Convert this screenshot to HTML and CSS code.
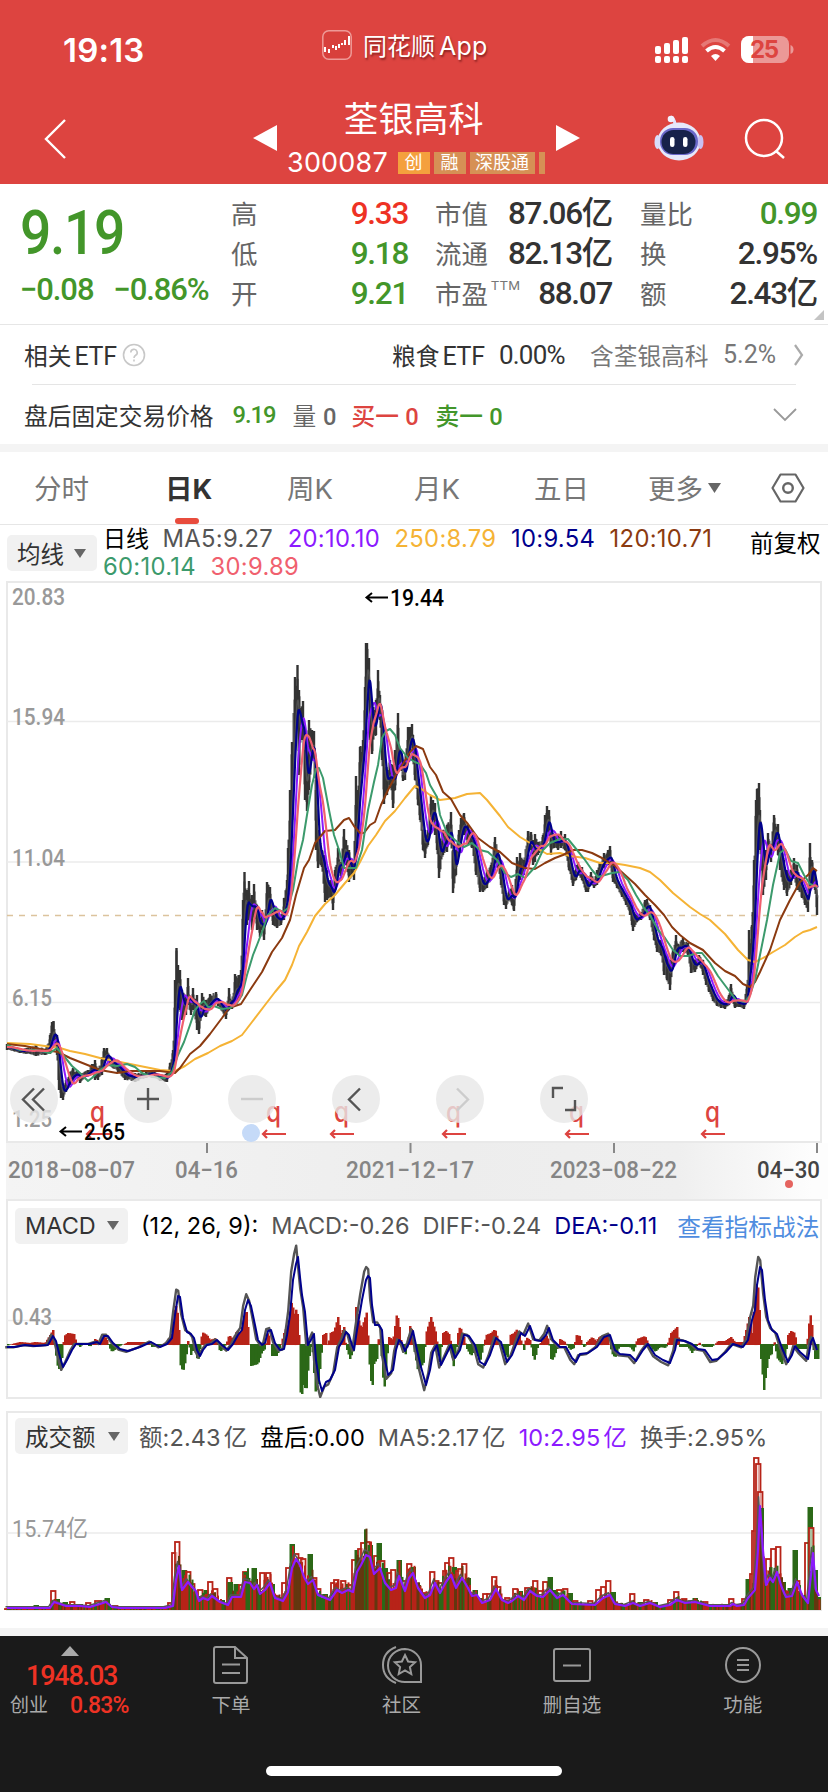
FILE: index.html
```html
<!DOCTYPE html>
<html lang="zh-CN">
<head>
<meta charset="utf-8">
<title>荃银高科 300087</title>
<link rel="stylesheet" href="styles.css">
</head>
<body>
<div class="app">
  <header class="header">
    <div class="status">
      <span class="clock">19:13</span>
      <span class="brand">
        <svg width="30" height="30" viewBox="0 0 30 30"><rect x=".8" y=".8" width="28.4" height="28.4" rx="6" fill="#d8403c" stroke="#ee9a97" stroke-width="1.5"/><path d="M3 17v5M7 19v4M11 15v3M14 16v4M17 14v4M20 13v2M23 10v5M27 6v9" stroke="#fff" stroke-width="2"/></svg>
        <span>同花顺<span class="lat">App</span></span>
      </span>
      <svg class="sys" width="136" height="30" viewBox="654 35 136 30">
        <g fill="#fff"><rect x="655" y="46" width="6" height="8" rx="2"/><rect x="664" y="43" width="6" height="11" rx="2"/><rect x="673" y="40" width="6" height="14" rx="2"/><rect x="682" y="37" width="6" height="17" rx="2"/><rect x="655" y="56" width="6" height="7" rx="2"/><rect x="664" y="56" width="6" height="7" rx="2"/><rect x="673" y="56" width="6" height="7" rx="2"/><rect x="682" y="56" width="6" height="7" rx="2"/></g>
        <g fill="none" stroke="#fff" stroke-width="4"><path d="M702 46Q715.500 34 729 46" opacity=".28"/><path d="M706.500 51Q715.500 43 724.500 51"/></g><path d="M711 56Q715.500 52 720 56L715.500 61Z" fill="#fff"/>
        <rect x="741" y="36" width="48" height="27" rx="8" fill="#eb9997"/><path d="M753 36h-4a8 8 0 0 0-8 8v11a8 8 0 0 0 8 8h4z" fill="#fff"/><path d="M790.500 45v9q3-1 3-4.500t-3-4.500" fill="#eb9997"/>
        <text x="750" y="57.500" class="batt" textLength="29">25</text>
      </svg>
    </div>
    <div class="titlebar">
      <svg class="back" width="24" height="42" viewBox="0 0 24 42"><path d="M22 2 3 21l19 19" fill="none" stroke="#fff" stroke-width="2.400"/></svg>
      <svg class="prev" width="24" height="26" viewBox="0 0 24 26"><path d="M24 0v26L0 13z" fill="#fff"/></svg>
      <div class="name">
        <h1>荃银高科</h1>
        <div class="code"><span class="num">300087</span><i class="tag first">创</i><i class="tag">融</i><i class="tag">深股通</i><i class="tag cut"></i></div>
      </div>
      <svg class="next" width="24" height="26" viewBox="0 0 24 26"><path d="M0 0v26l24-13z" fill="#fff"/></svg>
      <svg class="bot" width="52" height="46" viewBox="0 0 52 46">
        <path d="M22 9Q21 3 18 2" fill="none" stroke="#e1e0fa" stroke-width="3"/><circle cx="18" cy="4" r="3.300" fill="#f2f2ff"/><ellipse cx="26" cy="26.500" rx="21.500" ry="19" fill="#e6e8fb"/><ellipse cx="4.500" cy="27" rx="3" ry="7" fill="#d8ddfa"/><ellipse cx="47.500" cy="27" rx="3" ry="7" fill="#c9c0f2"/><rect x="7" y="13" width="38" height="27" rx="13" fill="#6967c9"/><rect x="8.500" y="15" width="34" height="24" rx="12" fill="#17224a"/><rect x="17" y="22" width="4.500" height="10" rx="2.200" fill="#fff"/><rect x="30" y="22" width="4.500" height="10" rx="2.200" fill="#fff"/>
      </svg>
      <svg class="search" width="42" height="42" viewBox="0 0 42 42"><circle cx="20" cy="20" r="18" fill="none" stroke="#fff" stroke-width="2.500"/><path d="m32 33 8 7" stroke="#fff" stroke-width="2.500"/></svg>
    </div>
  </header>

  <section class="quote">
    <div class="last"><b>9.19</b><div class="chg"><span>−0.08</span><span>−0.86%</span></div></div>
    <dl class="c1"><div><dt>高</dt><dd class="red">9.33</dd></div><div><dt>低</dt><dd class="green">9.18</dd></div><div><dt>开</dt><dd class="green">9.21</dd></div></dl>
    <dl class="c2"><div><dt>市值</dt><dd>87.06亿</dd></div><div><dt>流通</dt><dd>82.13亿</dd></div><div><dt>市盈<sup>TTM</sup></dt><dd>88.07</dd></div></dl>
    <dl class="c3"><div><dt>量比</dt><dd class="green">0.99</dd></div><div><dt>换</dt><dd>2.95%</dd></div><div><dt>额</dt><dd>2.43亿</dd></div></dl>
    <svg class="corner" width="10" height="10" viewBox="0 0 10 10"><path d="M10 0v10H0z" fill="#c4c4c4"/></svg>
  </section>

  <section class="row etf">
    <span class="lead">相关<span class="din">ETF</span></span>
    <svg width="24" height="24" viewBox="0 0 24 24"><circle cx="12" cy="12" r="10.500" fill="none" stroke="#c8c8c8" stroke-width="1.600"/><path d="M8.800 9.600a3.200 3.200 0 1 1 4.800 2.700q-1.600 1-1.600 2.700M12 16.500v2" fill="none" stroke="#c8c8c8" stroke-width="1.600"/></svg>
    <span class="e1">粮食<span class="din">ETF</span></span><span class="e2 din">0.00%</span><span class="e3">含荃银高科</span><span class="e4 din">5.2%</span>
    <svg class="e5" width="12" height="24" viewBox="0 0 12 24"><path d="m2 2 7 10-7 10" fill="none" stroke="#aaa" stroke-width="2.200"/></svg>
  </section>
  <div class="line"></div>
  <section class="row after">
    <span>盘后固定交易价格</span><b class="a1 green">9.19</b><span class="a2">量 <b>0</b></span><span class="a3">买一 <b>0</b></span><span class="a4">卖一 <b>0</b></span>
    <svg class="a5" width="24" height="16" viewBox="0 0 24 16"><path d="m1 2 11 11L23 2" fill="none" stroke="#999" stroke-width="1.800"/></svg>
  </section>
  <div class="band"></div>

  <nav class="tabs">
    <a class="t1">分时</a><a class="t2 on">日K</a><a class="t3">周K</a><a class="t4">月K</a><a class="t5">五日</a><a class="t6">更多</a>
    <svg class="t7" width="13" height="10" viewBox="0 0 13 10"><path d="M0 0h13L6.500 10z" fill="#666"/></svg>
    <svg class="t8" width="34" height="30" viewBox="0 0 34 30"><path d="M9.500 1.500h15L32.500 15l-8 13.500h-15L1.500 15z" fill="none" stroke="#666" stroke-width="2.200" stroke-linejoin="round"/><circle cx="17" cy="15" r="4.800" fill="none" stroke="#666" stroke-width="2.400"/></svg>
  </nav>

  <section class="ma">
    <span class="pill">均线<i></i></span>
    <div class="malist"><span class="k">日线</span><span>MA5:9.27</span><span class="purple">20:10.10</span><span class="gold">250:8.79</span><span class="navy">10:9.54</span><span class="brown">120:10.71</span><span class="sea">60:10.14</span><span class="pink">30:9.89</span></div>
    <span class="adj">前复权</span>
  </section>

  <section class="kchart">
    <svg id="price" width="828" height="562" viewBox="0 581 828 562"></svg>
    <div class="tools">
      <button><svg viewBox="0 0 48 48"><path d="M34 13.500 23 24.500l11 11M24 13.500 13 24.500l11 11"/></svg></button>
      <button class="wide"><svg viewBox="0 0 48 48"><path d="M24 13v22M13 24h22"/></svg></button>
      <button class="off"><svg viewBox="0 0 48 48"><path d="M13 24h22"/></svg></button>
      <button><svg viewBox="0 0 48 48"><path d="M28 13.500 17 24.500l11 11"/></svg></button>
      <button class="off"><svg viewBox="0 0 48 48"><path d="m21 13.500 11 11-11 11"/></svg></button>
      <button><svg viewBox="0 0 48 48"><path d="M23 13H13v10M25 35h10V25"/></svg></button>
    </div>
  </section>
  <svg class="axis" id="axis" width="828" height="56" viewBox="0 1143 828 56"></svg>

  <section class="panel macd">
    <div class="legend"><span class="pill">MACD<i></i></span><span class="k">(12, 26, 9):</span><span>MACD:-0.26</span><span>DIFF:-0.24</span><span class="navy">DEA:-0.11</span><a class="link">查看指标战法</a></div>
    <svg id="macd" width="828" height="154" viewBox="0 1244 828 154"></svg>
  </section>
  <section class="panel vol">
    <div class="legend"><span class="pill">成交额<i></i></span><span>额:2.43<em>亿</em></span><span class="k">盘后:0.00</span><span>MA5:2.17<em>亿</em></span><span class="purple">10:2.95<em>亿</em></span><span>换手:2.95%</span></div>
    <svg id="vol" width="828" height="154" viewBox="0 1456 828 154"></svg>
  </section>
  <div class="band foot"></div>

  <footer class="nav">
    <div class="index"><svg width="18" height="10" viewBox="0 0 18 10"><path d="m9 0 9 10H0z" fill="#aaa"/></svg><b>1948.03</b><div><span>创业</span><b>0.83%</b></div></div>
    <a><svg viewBox="0 0 44 40"><path d="M26 2H7a2 2 0 0 0-2 2v32a2 2 0 0 0 2 2h29a2 2 0 0 0 2-2V13zM26 2v11h12M13 19.500h18M13 28h18"/></svg>下单</a>
    <a><svg viewBox="0 0 44 40"><path d="M16 2Q3 7 3 20t13 18M25 4a16.500 16 0 0 0 0 33h16V20A16.500 16 0 0 0 25 4ZM25 10l3.100 6.500 7 .8-5.200 4.700 1.400 7-6.300-3.500-6.300 3.500 1.400-7-5.200-4.700 7-.8z"/></svg>社区</a>
    <a><svg viewBox="0 0 44 40"><rect x="4" y="4" width="36" height="32" rx="2"/><path d="M13 20.500h18"/></svg>删自选</a>
    <a><svg viewBox="0 0 44 40"><circle cx="22" cy="20" r="17"/><path d="M16 15h12M16 20h12M16 25h12"/></svg>功能</a>
    <div class="home"></div>
  </footer>
</div>
<script src="chart.js"></script>
</body>
</html>
```
FILE: styles.css
```css
* { box-sizing: border-box; }
body { margin: 0; background: #fff; font-family: "Inter", "Noto Sans CJK SC", sans-serif; color: #333; }
h1, dl, dd, dt { margin: 0; font-weight: 400; }
i, em { font-style: normal; }
svg { display: block; flex: none; }
.app { width: 828px; height: 1792px; overflow: hidden; display: flex; flex-direction: column; }
.app > * { flex: none; }
.red { color: #ee3224 !important; }
.green { color: #43962a !important; }
.k { color: #000; }
.purple { color: #8c1aff; }
.gold { color: #f5b335; }
.navy { color: #00008c; }
.brown { color: #8b3a10; }
.sea { color: #3c9a6c; }
.pink { color: #f0606e; }
.din { font-family: "Roboto", sans-serif; }

.header { height: 184px; background: #dd4440; color: #fff; }
.status { height: 100px; display: flex; align-items: flex-start; }
.clock { width: 259px; margin-left: 63px; padding-top: 31px; font: 600 33px/38px Inter; letter-spacing: .2px; }
.brand { width: 332px; display: flex; gap: 11px; padding-top: 31px; font-size: 24px; line-height: 30px; text-shadow: 1px 2px 2px rgba(60,0,0,.5); }
.brand > svg { margin-top: -1px; }
.lat { margin-left: 4px; font-size: 25px; letter-spacing: .2px; }
.sys { margin-top: 35px; overflow: visible; }
.batt { font: 700 24px Inter; fill: #dd4440; }
.titlebar { height: 84px; display: flex; align-items: flex-start; }
.back { margin: 18px 0 0 43px; }
.prev { margin: 25px 0 0 186px; }
.name { width: 280px; height: 84px; }
h1 { text-align: center; font-size: 35px; line-height: 42px; margin-top: -2px; padding-right: 7px; }
.code { display: flex; gap: 4px; padding-left: 10px; margin-top: 8px; height: 30px; align-items: center; }
.num { width: 107px; font-size: 27px; line-height: 28px; letter-spacing: .2px; }
.tag { height: 22px; padding: 0 6px 0 5px; background: #d69055; font-size: 18px; line-height: 21px; min-width: 32px; text-align: center; }
.tag.first { background: #f4a03d; }
.tag.cut { min-width: 0; width: 6px; padding: 0; }
.next { margin: 25px 0 0 -1px; }
.bot { margin: 15px 0 0 73px; }
.search { margin: 18px 0 0 39px; }

.quote { height: 141px; display: flex; position: relative; border-bottom: 1px solid #e6e6e6; font-family: Roboto, "Noto Sans CJK SC", sans-serif; padding-top: 10px; }
.last { width: 231px; padding-left: 20px; color: #43962a; }
.last > b { display: block; width: 140px; font-weight: 500; font-size: 62px; line-height: 70px; letter-spacing: -1.500px; margin-top: 4px; transform: scaleX(.89); transform-origin: left; }
.chg { display: flex; gap: 20px; margin-top: 2px; font-weight: 500; font-size: 31px; line-height: 40px; letter-spacing: -1.100px; }
.quote dl > div { display: flex; justify-content: space-between; height: 40px; line-height: 40px; }
.quote dt { font-size: 26.500px; color: #666; white-space: nowrap; padding-top: 1px; }
.quote dd { font-size: 31.500px; font-weight: 500; letter-spacing: -1.300px; }
.quote sup { font-size: 13.500px; vertical-align: 14px; line-height: 0; margin-left: 3px; color: #777; letter-spacing: .5px; }
.c1 { width: 177px; }
.c2 { width: 177px; margin-left: 27px; }
.c3 { width: 177px; margin-left: 28px; }
.corner { position: absolute; right: 4px; bottom: 4px; }

.row { display: flex; align-items: center; font-size: 23.700px; }
.etf { height: 59px; padding-left: 24px; }
.lead { width: 98px; }
.lead .din, .e1 .din { margin-left: 3px; font-size: 25px; letter-spacing: -.3px; }
.e1 { margin-left: 246px; width: 107px; }
.e2 { width: 91px; font-size: 26px; letter-spacing: -.8px; }
.e3 { width: 133px; color: #777; }
.e4 { width: 70px; color: #777; font-size: 25px; }
.line { height: 1px; background: #e5e5e5; margin: 0 32px; }
.after { height: 59px; padding: 1px 0 0 24px; }
.after b { font-family: Roboto; font-weight: 500; letter-spacing: -1px; }
.a1 { margin-left: 19px; width: 60px; }
.a2 { width: 59px; color: #666; }
.a3 { width: 84px; color: #dd4440; font-weight: 500; }
.a4 { width: 337px; color: #43962a; font-weight: 500; }
.band { height: 8px; background: #f4f4f4; }

.tabs { height: 73px; display: flex; align-items: center; border-bottom: 1px solid #e6e6e6; font-size: 27.500px; color: #777; }
.tabs a { height: 72px; line-height: 74px; }
.t1 { margin-left: 34px; width: 131px; }
.t2 { width: 122px; }
.tabs .on { color: #333; font-weight: 700; position: relative; }
.on::after { content: ""; position: absolute; left: 10px; bottom: 0; width: 24px; height: 6px; border-radius: 3px; background: #e84c3d; }
.t3 { width: 127px; }
.t4 { width: 120px; }
.t5 { width: 114px; }
.t6 { width: 60px; }
.t8 { margin-left: 50px; }

.pill { display: flex; flex: none; align-items: center; height: 36px; border-radius: 5px; background: #f1f1f1; color: #333; white-space: nowrap; letter-spacing: 0; }
.pill i { border: 6px solid transparent; border-top: 9px solid #666; border-bottom: 0; }
.ma { height: 56px; display: flex; position: relative; font-size: 23.500px; }
.ma .pill { width: 90px; margin: 10px 0 0 7px; padding-left: 10px; gap: 10px; }
.malist { width: 640px; margin-left: 6px; display: flex; flex-wrap: wrap; column-gap: 14.500px; align-content: flex-start; line-height: 28px; color: #555; font-size: 23.800px; letter-spacing: .3px; }
.malist .k { font-size: 23px; letter-spacing: 0; margin-right: -1px; }
.adj { color: #000; line-height: 38px; margin-left: 7px; font-size: 23.500px; }

.kchart { height: 562px; position: relative; }
.kchart > svg { overflow: visible; }
.tools { position: absolute; left: 10px; top: 494px; display: flex; gap: 56px; }
.tools button { width: 48px; height: 48px; padding: 0; border: 0; border-radius: 50%; background: rgba(231,231,231,.8); }
.tools .wide { margin-left: 10px; }
.tools svg { fill: none; stroke: #555; stroke-width: 2.400; }
.tools .off svg { stroke: #ccc; }
.axis { background: linear-gradient(165deg, rgba(255,255,255,0) 50%, rgba(244,244,244,0)), linear-gradient(90deg, #fff 0 6px, #f4f4f4 6px, #ededed 55%, #efefef 82%, #fdfdfd 98%); }
.ax { font: 500 24px Roboto; fill: #858585; }
.ax.now { fill: #444; }
.lab { font: 500 24px Roboto, "Noto Sans CJK SC"; fill: #999; }
.lab.cn { font-weight: 400; }
.mark { font: 500 24px Roboto; fill: #000; }
.q { font: 500 28px Inter; fill: #dd4440; }

.panel { height: 200px; border: 2px solid #e9e9e9; margin: 0 6px; }
.panel > svg { margin-left: -8px; }
.legend { display: flex; height: 43px; padding: 6px 0 0 7px; align-items: center; font-size: 24px; white-space: nowrap; color: #555; }
.macd .pill { width: 113px; padding-left: 10px; gap: 11px; }
.macd .legend { gap: 13px; font-size: 23.500px; }
.link { color: #4f8ddf; font-size: 23.700px; margin-left: 7px; }
.vol { margin-top: 12px; }
.vol .legend { gap: 13px; font-size: 23.500px; letter-spacing: .1px; padding-top: 3px; }
.vol em { margin-left: 3px; }
.vol .pill { width: 113px; padding-left: 10px; gap: 12px; margin-right: -2px; }
.foot { margin-top: 17px; }

.nav { height: 156px; background: #1a1a1a; position: relative; display: flex; color: #aaa; }
.nav > a { width: 171px; height: 100px; display: flex; flex-direction: column; align-items: center; font-size: 19.500px; line-height: 28px; }
.nav > a svg { width: 44px; height: 40px; margin: 9px 0 6px; fill: none; stroke: #999; stroke-width: 2; }
.index { width: 146px; font-size: 19px; }
.index svg { margin: 10px 0 0 61px; }
.index b { display: block; font: 500 27px/34px Roboto; color: #ee3224; margin: 3px 0 0 26px; letter-spacing: -1.200px; }
.index div { display: flex; padding-left: 10px; line-height: 32px; margin-top: -3px; }
.index div b { font-size: 23px; line-height: 30px; margin: 1px 0 0 22px; letter-spacing: -.8px; }
.home { position: absolute; left: 266px; bottom: 16px; width: 296px; height: 10px; border-radius: 5px; background: #fff; }
```
FILE: chart.js
```js
const nums = s => s.trim().split(';').map(p => p.split(',').map(v => isNaN(v) ? v : +v));
const line = (pts, color, w = 2) =>
  `<polyline fill="none" stroke="${color}" stroke-width="${w}" stroke-linejoin="round" points="${pts.map(p => p[0].toFixed(1) + ',' + p[1].toFixed(1)).join(' ')}"/>`;
const at = (pts, x, k = 1) => {
  if (x <= pts[0][0]) return pts[0][k];
  for (let i = 1; i < pts.length; i++) {
    const a = pts[i - 1], b = pts[i];
    if (x <= b[0]) return a[k] + (b[k] - a[k]) * (x - a[0]) / (b[0] - a[0]);
  }
  return pts[pts.length - 1][k];
};
let seed = 7;
const rnd = () => (seed = (seed * 16807) % 2147483647) / 2147483647;
const text = (x, y, w, cls, t) => `<text x="${x}" y="${y}" textLength="${w}" lengthAdjust="spacingAndGlyphs" class="${cls}">${t}</text>`;
const rule = (y, x2 = 821) => `<path d="M7 ${y}H${x2}" stroke="#ebebeb" stroke-width="1.5"/>`;

/* x, high, low of the price range */
const candles = nums('7,1044,1050;20,1049,1053;36,1045,1056;45,1049,1055;50,1035,1054;52,1022,1045;53.5,1021,1040;57,1035,1055;59,1060,1090;61,1080,1098;63,1088,1100;66,1080,1092;70,1072,1085;73,1068,1082;77,1070,1078;80,1073,1083;88,1070,1076;92,1064,1074;95,1060,1080;98,1068,1080;102,1057,1075;104,1048,1065;107,1048,1060;110,1056,1066;118,1062,1072;125,1070,1080;135,1073,1082;146,1072,1078;152,1070,1076;160,1075,1081;167,1073,1082;170,1063,1075;173,1050,1065;175,980,1050;176.5,948,1020;178,965,1000;180,970,1010;182,990,1020;186,995,1015;188,978,1005;191,1000,1015;193,988,1010;197,995,1030;199,1015,1034;202,993,1015;206,1000,1017;210,994,1010;216,992,1003;218,998,1006;226,1007,1019;229,988,1010;232,1000,1009;235,974,1004;239,975,1000;241,970,980;243,900,960;244.5,872,920;247,890,925;249,881,920;252,895,930;254,884,915;257,905,930;260,920,937;262,910,930;264,925,940;267,882,915;270,887,910;273,905,925;277,910,928;281,915,925;284,898,920;287,880,910;288,848,900;290,790,870;292,742,820;295,677,750;297.5,665,720;299,690,775;301,708,740;303,701,740;305,750,800;307,760,811;309,720,790;312,730,760;314,731,760;316,790,850;318,830,868;322,850,867;325,855,902;327,870,900;331,880,897;333,890,910;335,870,890;338,848,870;341,862,880;344,829,865;346,840,865;349,850,882;352,862,876;354,862,880;356,776,860;358,790,830;360,747,790;363,740,770;365,687,740;366,643,700;367,643,690;369,658,700;370,690,740;372,710,754;376,700,735;378,670,715;380,695,720;382,710,760;384,745,804;387,770,795;390,760,785;393,765,808;395,750,790;398,713,765;400,750,765;403,775,781;405,760,780;408,727,760;410,727,750;412,724,745;413,735,760;415,750,780;418,780,805;420,790,820;423,830,850;425,830,858;428,830,845;431,796,825;433,800,820;435,803,835;437,820,850;439,840,878;443,830,855;447,825,852;451,812,840;453,850,893;456,850,875;459,830,850;461,818,840;464,813,835;468,825,845;472,830,848;476,840,875;480,870,892;483,880,892;487,870,888;491,865,880;495,837,860;498,850,868;501,865,885;504,890,905;506,895,909;509,890,900;512,885,905;514,895,911;517,857,885;520,853,880;524,860,875;528,831,850;531,832,850;533,840,865;535,834,862;538,842,855;543,835,850;545,815,840;547,806,830;549,810,835;551,830,855;554,836,848;558,835,850;561,831,848;565,834,850;569,852,870;573,875,886;576,865,880;578,862,875;582,867,880;586,885,892;588,880,892;591,872,885;594,880,888;597,870,885;600,862,872;604,853,868;608,850,865;610,846,865;613,865,882;617,880,888;622,888,897;626,895,905;630,900,915;632,905,925;633,910,931;637,915,922;641,912,920;645,900,915;647,899,908;650,905,920;654,925,940;657,935,952;661,940,955;664,950,975;667,955,980;670,960,990;673,950,965;676,935,955;678,944,955;683,938,952;688,943,955;691,952,973;695,960,972;699,955,965;703,960,975;706,972,985;709,980,992;713,990,1001;717,998,1006;721,1000,1008;725,1000,1009;729,995,1005;731,984,1000;735,997,1008;740,1000,1007;744,1000,1009;747,985,1003;749,930,995;752,925,965;754,860,920;756,800,870;757,789,850;759,783,840;760,810,850;763,840,895;766,850,880;768,833,855;771,845,862;774,815,840;778,824,855;780,840,870;784,860,890;787,870,896;791,870,885;794,858,878;797,865,890;802,880,898;805,890,905;808,895,912;810,843,880;812,860,885;815,870,890;817,895,915');
const ma60 = nums('7,1045;20,1050;36,1050;50,1053;57,1048;63,1055;72,1066;80,1073;88,1081;92,1078;100,1070;108,1065;117,1066;127,1064;135,1067;142,1073;152,1077;165,1078;172,1072;178,1055;184,1042;190,1025;195,1010;200,1004;204,1001;208,1007;214,1006;222,1009;230,1008;237,1003;242,995;247,975;253,955;257,945;262,932;268,915;275,908;283,912;288,908;293,890;298,860;303,840;307,815;312,785;316,769;319,768;323,778;329,810;334,835;339,850;344,868;352,868;356,868;362,850;368,810;374,782;378,765;382,738;386,731;390,729;395,735;400,748;408,758;415,762;420,764;426,773;430,785;437,797;440,815;447,833;455,840;464,847;472,843;480,850;488,852;497,860;505,873;511,877;518,874;525,878;535,867;543,850;550,843;560,839;568,839;577,850;585,860;592,870;598,877;605,875;612,873;620,872;628,880;636,895;644,908;650,915;658,930;665,938;673,950;680,956;688,956;697,953;702,953;710,963;718,976;727,988;736,1000;745,1002;750,995;755,980;760,955;767,920;773,885;780,853;785,849;791,861;798,863;804,875;810,884;817,887');
const ma120 = nums('7,1044;25,1046;45,1050;58,1052;70,1058;85,1064;100,1070;117,1073;130,1071;160,1071;175,1073;180,1068;190,1054;200,1046;210,1034;222,1018;229,1008;241,1004;250,990;262,972;272,952;282,938;290,920;296,895;304,868;309,860;315,843;325,831;335,830;344,820;349,818;354,826;360,833;364,833;370,825;375,822;381,805;388,790;396,775;404,762;410,752;416,746;423,749;430,767;436,775;443,792;451,799;460,815;468,824;478,838;490,847;500,852;512,863;525,868;535,869;545,863;555,858;563,855;573,850;582,850;592,853;602,858;615,866;625,875;635,884;645,895;655,905;664,915;672,927;680,935;690,943;703,950;715,963;725,971;735,976;743,984;750,987;755,982;760,972;770,950;780,920;790,900;800,882;808,875;813,868;817,871');
const ma250 = nums('7,1043;30,1044;60,1048;70,1051;85,1054;100,1058;120,1062;140,1066;160,1070;175,1071;185,1066;195,1059;208,1053;220,1046;232,1041;242,1035;252,1022;265,1005;275,992;285,980;292,965;299,946;307,932;315,916;325,904;335,895;345,883;354,873;360,862;368,846;376,835;385,821;395,811;405,798;415,786;420,788;430,795;440,800;455,798;467,794;480,793;487,800;500,816;508,827;520,837;530,843;540,850;547,854;560,853;570,856;585,858;600,863;612,863;625,865;640,868;650,872;660,880;673,893;690,907;700,914;710,920;725,934;738,950;748,960;755,962;765,957;773,952;785,945;795,937;803,932;810,930;817,927');

const mean = days => {
  const out = [];
  for (let x = 7; x <= 817.5; x += .5) {
    let s = 0;
    for (let i = 0; i < days; i++) {
      const u = x - i * .5;
      s += (at(candles, u, 1) + at(candles, u, 2)) / 2;
    }
    out.push([x, s / days]);
  }
  return out;
};
let bars = '';
for (let x = 7.5; x <= 817; x += 1) {
  const h = at(candles, x, 1), l = at(candles, x, 2), r = l - h;
  bars += `<path d="M${x} ${(h + r * .3 * rnd()).toFixed(1)}V${(l - r * .2 * rnd()).toFixed(1)}" stroke="${rnd() > .4 ? '#3a3a3a' : '#5a5a5a'}" stroke-width="2"/>`;
}
for (const c of candles) bars += `<path d="M${c[0]} ${c[1]}V${c[2]}" stroke="#333" stroke-width="2.4"/>`;
let marks = '';
for (const x of [86, 262, 330, 442, 565, 701]) {
  marks += `<text x="${x + 4}" y="1121.500" class="q" textLength="15" lengthAdjust="spacingAndGlyphs">q</text><path d="M${x + 24} 1134H${x + 1}M${x + 5} 1130l-4 4 4 4" fill="none" stroke="#dd4440" stroke-width="2.2"/>`;
}
document.getElementById('price').innerHTML =
  `<rect x="7" y="582" width="814" height="560" fill="none" stroke="#e9e9e9" stroke-width="2"/>` + rule(721.5) + rule(862) + rule(1002.5) +
  text(12, 605, 53, 'lab', '20.83') + text(12, 725, 53, 'lab', '15.94') + text(12, 866, 53, 'lab', '11.04') + text(12, 1006, 40, 'lab', '6.15') + text(12, 1127, 40, 'lab', '1.25') +
  `<path d="M7 915.500H821" stroke="#dcc39d" stroke-width="1.500" stroke-dasharray="6 6"/>` +
  bars + line(mean(5), '#505050', 1.5) + line(mean(20), '#8c1aff') + line(ma250, '#f5b335') + line(mean(10), '#00008c', 2.2) + line(ma120, '#8b3a10') + line(ma60, '#3c9a6c') + line(mean(30), '#f0606e', 2.2) +
  `<circle cx="251" cy="1133" r="9" fill="#c5daf8"/>` + marks +
  `<path d="M388 597.500H366M372 593l-5.500 4.500 5.500 4.500M82 1131.500H60M66 1127l-5.500 4.500 5.500 4.500" fill="none" stroke="#000" stroke-width="2"/>` +
  text(390, 606, 54, 'mark', '19.44') + text(84, 1139.5, 41, 'mark', '2.65');

document.getElementById('axis').innerHTML =
  `<path d="M207 1143v10M410.500 1143v10M614 1143v10M817 1143v10" stroke="#888" stroke-width="2"/>` +
  text(8, 1178, 127, 'ax', '2018−08−07') + text(175, 1178, 63, 'ax', '04−16') + text(346, 1178, 128, 'ax', '2021−12−17') + text(550, 1178, 127, 'ax', '2023−08−22') + text(757, 1178, 63, 'ax now', '04−30') +
  `<circle cx="789" cy="1184" r="4" fill="#e5645f"/>`;

const dea = nums('7,1347;15,1347;25,1345;35,1346;48,1345;53,1336;56,1341;60,1357;63,1367;67,1360;72,1350;76,1344;90,1344;97,1342;100,1344;104,1336;108,1336;113,1343;120,1349;128,1351;140,1347;151,1342;160,1347;167,1344;172,1338;175,1315;178,1296;180,1297;183,1318;187,1332;191,1334;194,1338;197,1350;200,1356;203,1350;207,1345;212,1344;217,1340;222,1345;228,1350;233,1344;238,1335;242,1330;245,1310;248,1300;251,1306;255,1325;258,1340;262,1345;265,1343;268,1331;271,1330;275,1343;280,1350;284,1349;287,1335;290,1315;293,1280;296,1264;298,1257;300,1277;302,1295;305,1312;308,1345;312,1338;314,1334;316,1360;319,1380;322,1391;326,1382;330,1380;335,1370;339,1347;343,1340;346,1332;349,1335;352,1345;354,1350;357,1330;362,1300;366,1280;368,1276;370,1278;372,1305;375,1325;379,1325;382,1330;384,1355;388,1375;393,1370;396,1350;399,1340;402,1343;405,1351;409,1343;413,1331;417,1350;421,1367;426,1385;430,1370;433,1352;437,1345;441,1365;446,1355;451,1345;455,1358;460,1350;464,1335;469,1336;475,1345;480,1362;485,1365;490,1355;496,1338;501,1342;507,1362;512,1355;518,1340;521,1333;525,1336;530,1326;535,1340;541,1341;546,1335;549,1328;553,1340;560,1347;566,1347;572,1358;576,1362;580,1354;588,1353;597,1347;604,1337;610,1335;615,1350;620,1354;630,1355;636,1361;643,1350;648,1344;655,1355;663,1360;670,1363;675,1350;677,1340;685,1341;692,1344;698,1349;705,1350;712,1360;718,1359;726,1352;733,1344;743,1347;748,1340;752,1320;755,1310;757,1285;760,1267;762,1270;765,1300;768,1320;772,1330;777,1334;782,1348;788,1362;792,1355;795,1346;800,1352;808,1359;811,1342;813,1338;817,1350');
const hist = nums('7,2;12,-1;20,-3;30,-2;35,-3;45,-2;50,-10;53,-15;55,5;58,25;61,25;63,3;64,-9;68,-12;74,-11;77,0;80,3;85,-2;90,3;95,-6;100,-3;104,-10;107,-5;109,3;112,8;118,3;128,-3;140,-3;148,-3;152,3;160,2;167,-4;172,-12;175,-40;177,-38;179,-15;180,20;183,28;186,15;188,-4;191,11;194,3;198,18;200,5;202,-13;207,-10;210,-5;216,-7;220,8;225,3;229,-10;233,-6;237,-15;240,-10;243,-22;246,-38;249,-8;251,22;258,20;262,8;265,5;268,-15;270,-4;272,12;277,12;280,3;284,-12;288,-22;292,-45;294,-30;297,-38;299,-10;300,48;302,50;304,38;306,50;309,15;311,3;313,10;315,48;318,45;321,15;323,-10;326,-12;328,3;330,-12;334,-14;338,-28;341,-12;344,-18;346,3;350,15;354,5;356,-38;360,-20;362,-18;367,-34;369,15;372,48;374,20;377,15;378,-8;381,5;384,48;387,15;389,-8;393,-5;397,-33;400,-15;402,5;406,11;410,-19;412,-15;414,5;418,28;424,18;426,-12;431,-28;436,-12;438,5;440,18;443,-12;446,-14;450,-10;453,25;456,8;458,-12;460,-19;464,-8;467,5;471,12;475,6;480,18;483,4;486,-10;491,-12;495,-16;498,-6;502,3;505,10;508,14;510,-10;514,-12;517,-16;520,-8;524,6;526,-8;530,-5;533,12;535,17;537,5;541,-3;547,-10;549,-3;551,15;553,16;557,5;560,-6;565,-3;570,6;574,4;576,-10;580,-9;583,3;585,3;587,-3;592,-8;596,-4;600,-9;608,-8;610,2;613,12;616,13;619,3;630,3;634,8;637,-6;645,-9;650,2;655,8;660,3;666,4;671,-12;677,-18;680,3;688,3;692,9;696,3;699,-3;703,3;712,3;718,-4;725,-4;731,-8;735,-3;743,-3;746,-15;749,-28;752,-12;754,-40;757,-65;759,-50;760,-20;761,15;764,46;766,30;769,12;772,10;774,-6;777,14;782,20;786,10;788,-10;791,-14;795,-12;797,5;806,5;808,-10;810,-33;812,-20;813,3;815,15;818,15');
let hb = '';
for (let x = 8; x <= 818; x += 1.5) {
  const v = at(hist, x);
  hb += v < 0 ? `<rect x="${x - 1}" y="${(1345 + v).toFixed(1)}" width="2.500" height="${-v}" fill="#b72318"/>` : `<rect x="${x - 1}" y="1344" width="2.500" height="${v}" fill="#2b6817"/>`;
}
const diff = dea.map(p => [p[0] - 1.8, 1345 + (p[1] - 1345) * 1.13]);
document.getElementById('macd').innerHTML = rule(1320.5) + hb + line(diff, '#555', 2.4) + line(dea, '#00008c', 2) + text(12, 1325, 40, 'lab', '0.43');

const peaks = nums('7,2,r;36,5,g;45,2,r;53,20,r;57,11,g;65,8,g;72,9,r;80,6,g;88,8,r;97,10,r;107,12,g;115,5,r;145,2,g;166,3,r;170,8,r;174,58,r;177,69,r;184,40,g;188,39,r;192,27,r;200,21,r;206,20,g;210,29,r;215,22,r;222,10,g;229,33,r;230,28,g;236,26,g;241,26,r;245,39,r;246,38,g;254,42,g;262,38,r;268,38,r;272,26,g;280,13,r;284,28,r;288,43,r;292,66,g;296,57,r;300,53,r;303,52,r;310,56,g;314,33,r;318,22,r;325,16,g;333,28,r;336,31,r;343,30,r;349,26,r;354,51,r;357,60,g;360,62,r;363,68,r;367,69,r;370,65,g;376,55,r;379,67,g;382,50,r;385,42,g;389,38,r;393,41,r;399,50,g;404,30,r;409,47,r;413,43,g;418,25,g;425,18,r;432,39,r;436,30,r;440,28,r;445,40,r;447,48,r;451,53,r;454,43,g;458,40,r;460,42,r;464,47,r;468,32,g;475,20,g;480,12,g;485,17,r;489,17,r;494,34,r;498,24,r;507,13,r;515,22,r;520,19,g;527,23,r;531,22,g;535,30,r;540,20,r;545,29,r;550,33,g;555,20,g;559,21,r;565,22,r;570,17,g;575,10,r;590,10,r;598,21,r;603,24,r;608,30,r;613,18,g;620,7,g;632,17,r;640,8,g;646,11,r;655,8,g;662,5,r;670,11,r;676,19,r;684,12,r;695,12,g;705,9,r;715,6,g;731,12,r;740,6,r;744,12,r;748,31,g;752,37,r;754,80,r;756,153,r;758,147,r;760,119,r;761,102,g;765,40,r;768,52,r;773,62,r;778,64,r;783,28,g;790,22,g;795,60,g;797,30,r;803,14,g;807,68,r;810,103,g;811,83,r;815,40,g;818,13,g');
const ma10 = nums('7,2;50,2;54,8;60,6;66,4;80,4;90,3;100,6;106,8;112,3;120,2;165,2;173,4;176,30;179,44;182,20;188,28;192,23;196,19;199,9;203,12;208,10;212,14;220,8;228,5;232,13;241,13;245,28;250,27;254,21;257,25;260,16;265,20;270,27;275,12;283,9;288,18;292,42;296,51;300,45;304,33;308,26;313,30;318,15;330,10;337,20;342,17;348,20;353,18;357,38;361,45;366,55;370,53;374,36;380,42;385,27;391,20;396,22;399,34;405,19;409,32;413,37;418,22;425,12;430,15;435,27;440,17;446,28;451,35;456,22;462,32;468,22;472,14;477,15;482,7;490,10;496,21;502,10;508,7;512,9;518,14;524,10;530,19;537,14;543,13;550,20;557,12;563,15;572,6;595,5;603,12;610,15;615,6;625,4;633,7;640,4;650,7;660,3;670,5;677,10;685,7;695,8;710,4;730,4;733,6;737,4;744,5;748,12;755,20;758,60;760,104;763,60;766,25;770,32;773,28;777,38;782,22;786,13;792,14;797,28;802,15;808,7;811,35;813,57;816,20;819,14');
const bar = (x, h, c) => c === 'g'
  ? `<rect x="${x - 2.5}" y="${(1610 - h).toFixed(1)}" width="5.500" height="${h.toFixed(1)}" fill="#2b6817"/>`
  : `<rect x="${x - 2}" y="${(1611 - h).toFixed(1)}" width="4.500" height="${Math.max(h - 1, .5).toFixed(1)}" fill="#fff" fill-opacity=".6" stroke="#b72318" stroke-width="1.800"/>`;
let vb = peaks.map(p => bar(p[0], p[1], p[2])).join('');
for (let x = 8; x < 820; x += 1.5) {
  const e = Math.min(at(ma10, x) * 1.3, at(peaks, x));
  const h = e * (.7 + .5 * rnd()), r = rnd();
  vb += `<rect x="${x - 1}" y="${(1610 - h).toFixed(1)}" width="2" height="${h.toFixed(1)}" fill="${r < .5 ? '#b72318' : r < .75 ? '#2b6817' : '#64370f'}"/>`;
}
document.getElementById('vol').innerHTML = rule(1533) + vb + line(ma10.map(p => [p[0] - 1.5, 1609 - p[1] * 1.08]), '#555', 1.5) + line(ma10.map(p => [p[0], 1610 - p[1]]), '#8c1aff', 2.2) + text(12, 1537, 76, 'lab cn', '15.74亿');
```
